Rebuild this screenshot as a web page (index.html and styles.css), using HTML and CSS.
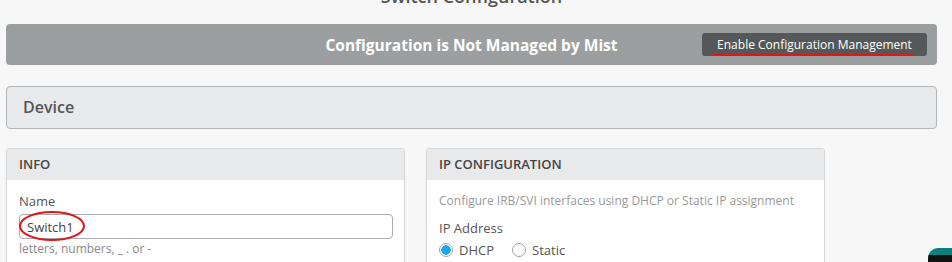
FILE: index.html
```html
<!DOCTYPE html>
<html lang="en">
<head>
    <meta charset="UTF-8">
    <meta name="viewport" content="width=device-width, initial-scale=1.0">
    <title>Switch Configuration</title>
    <link rel="stylesheet" href="styles.css">
</head>
<body>
    <div class="page">
        <h2 class="page-title">Switch Configuration</h2>

        <div class="banner">
            <span></span>
            <span class="banner-text">Configuration is Not Managed by Mist</span>
            <div class="banner-action">
                <button type="button" class="enable-btn">Enable Configuration Management
                    <span class="mark-line"></span>
                </button>
            </div>
        </div>

        <div class="section-bar">Device</div>

        <div class="cards">
            <div class="card">
                <div class="card-head">INFO</div>
                <div class="card-body">
                    <label class="field-label" for="name">Name</label>
                    <div class="input-wrap">
                        <input type="text" id="name" class="text-input" value="Switch1">
                        <!-- red annotation around the value -->
                        <svg class="mark-ring" width="70" height="32" viewBox="0 0 70 32">
                            <ellipse cx="34" cy="16" rx="32" ry="14" fill="none" stroke="#e0161b" stroke-width="2"/>
                        </svg>
                    </div>
                    <div class="hint">letters, numbers, _ . or -</div>
                </div>
            </div>

            <div class="card">
                <div class="card-head">IP CONFIGURATION</div>
                <div class="card-body">
                    <div class="desc">Configure IRB/SVI interfaces using DHCP or Static IP assignment</div>
                    <div class="field-label ip-label">IP Address</div>
                    <div class="radio-row">
                        <label class="radio"><span class="dot checked"></span>DHCP</label>
                        <label class="radio"><span class="dot"></span>Static</label>
                    </div>
                </div>
            </div>
        </div>
    </div>

    <div class="chat-widget"></div>
</body>
</html>
```

FILE: styles.css
```css
* {
    box-sizing: border-box;
}
body {
    margin: 0;
    font-family: "Open Sans", "Noto Sans", sans-serif;
    background-color: #f7f7f7;
    color: #444;
    overflow: hidden;
}
.page {
    padding: 0 15px 0 6px;
}
.page-title {
    margin: -16px 0 16px 0;
    font-size: 18px;
    line-height: 24px;
    font-weight: 600;
    text-align: center;
    color: #555;
}

/* top grey banner */
.banner {
    display: grid;
    grid-template-columns: 1fr auto 1fr;
    align-items: center;
    height: 41px;
    background-color: #9c9fa0;
    border-radius: 4px;
}
.banner-text {
    color: #fff;
    font-size: 15.5px;
    font-weight: 700;
}
.banner-action {
    display: flex;
    justify-content: flex-end;
    padding-right: 10px;
}
.enable-btn {
    position: relative;
    height: 23px;
    width: 225px;
    padding: 0;
    border: none;
    border-radius: 3px;
    background-color: #545859;
    color: #fff;
    font-family: "Open Sans", "Noto Sans", sans-serif;
    font-size: 12px;
    line-height: 23px;
}
.mark-line {
    position: absolute;
    left: 10px;
    right: 13px;
    bottom: 0;
    height: 2px;
    background-color: #e0161b;
    border-radius: 1px;
}

/* device bar */
.section-bar {
    margin-top: 21px;
    height: 43px;
    padding-left: 16px;
    background-color: #e8e9ea;
    border: 1px solid #b4b6b7;
    border-radius: 4px;
    font-size: 16px;
    font-weight: 600;
    line-height: 41px;
    color: #555;
}

/* cards */
.cards {
    display: grid;
    grid-template-columns: 399px 399px;
    gap: 21px;
    margin-top: 19px;
}
.card {
    height: 140px;
    background-color: #fff;
    border: 1px solid #d6d7d8;
    border-radius: 3px;
    box-shadow: 0 1px 2px rgba(0, 0, 0, 0.05);
}
.card-head {
    height: 31px;
    padding-left: 12px;
    background-color: #e8e9ea;
    font-size: 13px;
    font-weight: 600;
    line-height: 31px;
    color: #444;
}
.card-body {
    padding: 12px 12px 0 12px;
}
.field-label {
    display: block;
    font-size: 13px;
    line-height: 18px;
    color: #555;
}
.input-wrap {
    position: relative;
    margin-top: 4px;
    width: 374px;
}
.text-input {
    display: block;
    width: 100%;
    height: 25px;
    padding: 0 7px;
    border: 1px solid #a9abac;
    border-radius: 4px;
    font-family: "Open Sans", "Noto Sans", sans-serif;
    font-size: 13px;
    color: #444;
    background-color: #fff;
}
.mark-ring {
    position: absolute;
    left: -1px;
    top: -4px;
}
.hint {
    margin-top: 2px;
    font-size: 12px;
    line-height: 16px;
    color: #888;
}
.desc {
    font-size: 12px;
    line-height: 18px;
    color: #999;
}
.ip-label {
    margin-top: 9px;
}
.radio-row {
    display: flex;
    gap: 18px;
    margin-top: 4px;
}
.radio {
    display: flex;
    align-items: center;
    gap: 6px;
    font-size: 13px;
    line-height: 18px;
    color: #555;
}
.dot {
    width: 14px;
    height: 14px;
    border: 1px solid #a0a2a3;
    border-radius: 50%;
    background-color: #fff;
}
.dot.checked {
    background: radial-gradient(circle, #1ea7f0 0 4.5px, #fff 5px);
}

/* floating chat button, bottom right */
.chat-widget {
    position: absolute;
    left: 928px;
    top: 248px;
    width: 60px;
    height: 60px;
    border-radius: 10px;
    background: linear-gradient(#0f7f7d 0 7px, #111 7px);
}
```
